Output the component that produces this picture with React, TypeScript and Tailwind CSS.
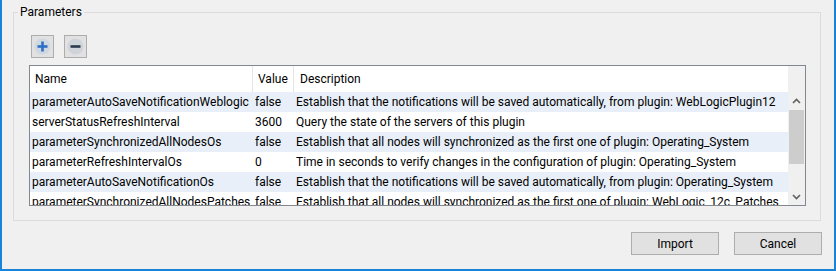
import React from 'react';

interface Param {
  name: string;
  value: string;
  description: string;
}

const params: Param[] = [
  {
    name: 'parameterAutoSaveNotificationWeblogic',
    value: 'false',
    description: 'Establish that the notifications will be saved automatically, from plugin: WebLogicPlugin12',
  },
  { name: 'serverStatusRefreshInterval', value: '3600', description: 'Query the state of the servers of this plugin' },
  {
    name: 'parameterSynchronizedAllNodesOs',
    value: 'false',
    description: 'Establish that all nodes will synchronized as the first one of plugin: Operating_System',
  },
  {
    name: 'parameterRefreshIntervalOs',
    value: '0',
    description: 'Time in seconds to verify changes in the configuration of plugin: Operating_System',
  },
  {
    name: 'parameterAutoSaveNotificationOs',
    value: 'false',
    description: 'Establish that the notifications will be saved automatically, from plugin: Operating_System',
  },
  {
    name: 'parameterSynchronizedAllNodesPatches',
    value: 'false',
    description: 'Establish that all nodes will synchronized as the first one of plugin: WebLogic_12c_Patches',
  },
];

const PlusIcon = () => (
  <svg width="17" height="17" viewBox="0 0 17 17">
    <circle cx="8.5" cy="8.5" r="8" fill="#cfd7e1" />
    <rect x="7.2" y="3.5" width="2.6" height="10" fill="#2f6fc4" />
    <rect x="3.5" y="7.2" width="10" height="2.6" fill="#2f6fc4" />
  </svg>
);

const MinusIcon = () => (
  <svg width="17" height="17" viewBox="0 0 17 17">
    <circle cx="8.5" cy="8.5" r="8" fill="#cfd4da" />
    <rect x="3.5" y="7.2" width="10" height="2.6" fill="#2c3b4d" />
  </svg>
);

const Chevron = ({ up }: { up?: boolean }) => (
  <svg width="9" height="6" viewBox="0 0 9 6">
    <path d={up ? 'M1 5 L4.5 1.5 L8 5' : 'M1 1 L4.5 4.5 L8 1'} fill="none" stroke="#606060" strokeWidth="1.6" />
  </svg>
);

export default function App() {
  return (
    <div
      className="w-[836px] h-[271px] bg-[#f0f0f0] border-l-2 border-r-2 border-b-2 border-[#1883d7] flex flex-col text-[12px] text-black"
      style={{ fontFamily: 'Roboto, "Noto Sans", sans-serif' }}
    >
      <fieldset className="ml-[11px] mt-[4px] w-[808px] border border-[#dcdcdc] pl-[4px] pr-[14px] pb-[14px]">
        <legend className="px-[2px] leading-[16px]">Parameters</legend>

        <div className="flex gap-[10px] ml-[13px] mt-[15px]">
          <button className="w-[23px] h-[23px] border border-[#adadad] bg-[#e1e1e1] flex items-center justify-center">
            <PlusIcon />
          </button>
          <button className="w-[23px] h-[23px] border border-[#adadad] bg-[#e1e1e1] flex items-center justify-center">
            <MinusIcon />
          </button>
        </div>

        <div className="ml-[11px] mt-[7px] h-[141px] border border-[#828790] bg-white flex overflow-hidden">
          <div className="flex-1 flex flex-col overflow-hidden">
            <div className="flex h-[26px] items-center bg-white shrink-0">
              <div className="w-[223px] h-full pl-[5px] flex items-center border-r border-[#e5e5e5]">Name</div>
              <div className="w-[41px] h-full pl-[5px] flex items-center border-r border-[#e5e5e5]">Value</div>
              <div className="flex-1 h-full pl-[6px] flex items-center">Description</div>
            </div>
            {params.map((p, i) => (
              <div
                key={p.name}
                className={`flex h-[20px] shrink-0 items-center whitespace-nowrap ${i % 2 === 0 ? 'bg-[#e8eff8]' : 'bg-white'}`}
              >
                <div className="w-[223px] pl-[2px] overflow-hidden">{p.name}</div>
                <div className="w-[41px] pl-[2px] overflow-hidden">{p.value}</div>
                <div className="flex-1 pl-[2px] overflow-hidden">{p.description}</div>
              </div>
            ))}
          </div>

          <div className="w-[17px] bg-[#f0f0f0] flex flex-col">
            <div className="h-[26px]" />
            <div className="h-[17px] flex items-center justify-center">
              <Chevron up />
            </div>
            <div className="mx-[1px] mt-[1px] h-[54px] bg-[#cdcdcd]" />
            <div className="flex-1" />
            <div className="h-[17px] flex items-center justify-center">
              <Chevron />
            </div>
          </div>
        </div>
      </fieldset>

      <div className="flex justify-end gap-[15px] pr-[12px] mt-[11px]">
        <button className="w-[88px] h-[23px] border border-[#adadad] bg-[#e1e1e1]">Import</button>
        <button className="w-[88px] h-[23px] border border-[#adadad] bg-[#e1e1e1]">Cancel</button>
      </div>
    </div>
  );
}
